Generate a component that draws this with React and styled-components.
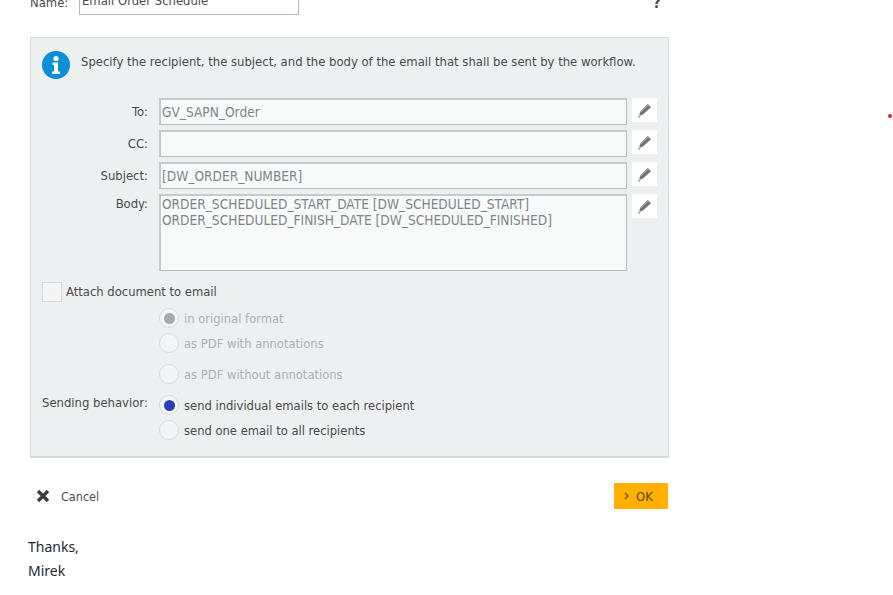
import React from 'react';
import styled, { createGlobalStyle } from 'styled-components';

const GlobalStyle = createGlobalStyle`
  html, body {
    margin: 0;
    padding: 0;
    background: #fff;
    overflow: hidden;
  }
`;

const Page = styled.div`
  position: relative;
  width: 893px;
  height: 595px;
  overflow: hidden;
  padding-left: 28px;
  box-sizing: border-box;
  font-family: "DejaVu Sans Condensed", "DejaVu Sans", sans-serif;
  font-stretch: condensed;
  font-size: 12.95px;
  color: #4a4a4a;
`;

const Dialog = styled.div`
  width: 640px;
  padding-left: 2px;
  box-sizing: border-box;
`;

const NameRow = styled.div`
  height: 15px;
  display: flex;
  align-items: flex-end;
  overflow: hidden;
`;

const NameLabel = styled.span`
  width: 49px;
  line-height: 20px;
  margin-bottom: 2px;
  white-space: nowrap;
`;

const NameInput = styled.div`
  width: 220px;
  height: 27px;
  flex: none;
  box-sizing: border-box;
  border: 1px solid #b4bcc0;
  border-top: none;
  padding: 3px 2px 0;
  line-height: 20px;
  white-space: nowrap;
`;

const Help = styled.span`
  margin-left: 354px;
  font-size: 15px;
  font-weight: 700;
  line-height: 20px;
  margin-bottom: 2px;
`;

const Panel = styled.div`
  margin-top: 22px;
  width: 639px;
  height: 421px;
  box-sizing: border-box;
  background: #edf0f1;
  border: 1px solid #d3d9dc;
  border-bottom-width: 2px;
  padding: 13px 11px 0;
`;

const Intro = styled.div`
  display: flex;
  align-items: flex-start;
  gap: 11px;
  height: 47px;
  line-height: 22px;
  white-space: nowrap;
`;

const Fields = styled.div`
  display: grid;
  grid-template-columns: 106px 468px 30px;
  column-gap: 11px;
  row-gap: 5px;
`;

const FieldLabel = styled.div`
  text-align: right;
  line-height: 27px;
  height: ${p => (p.$body ? '18px' : 'auto')};
  margin-top: ${p => (p.$body ? '-4px' : '0')};
`;

const TextBox = styled.div`
  height: ${p => (p.$tall ? '77px' : '27px')};
  box-sizing: border-box;
  background: #f8fafa;
  border: 1px solid #b4bcc0;
  border-top-width: 2px;
  border-left-width: 2px;
  border-top-color: #c4cbce;
  border-left-color: #c4cbce;
  padding: 0 1px;
  font-size: 13.6px;
  line-height: ${p => (p.$tall ? '16px' : '25px')};
  color: #7f8588;
  white-space: pre;
`;

const PencilButton = styled.div`
  width: 25px;
  height: 24px;
  margin-left: -6px;
  background: #fff;
  display: flex;
  align-items: center;
  justify-content: center;
`;

const AttachRow = styled.div`
  display: flex;
  align-items: center;
  gap: 4px;
  margin-top: 11px;
  height: 20px;
  line-height: 24px;
  font-size: 12.9px;
`;

const Checkbox = styled.span`
  width: 20px;
  height: 20px;
  box-sizing: border-box;
  border: 1px solid #d3d9dc;
  background: #f3f5f6;
`;

const RadioRow = styled.div`
  display: flex;
  align-items: center;
  height: 20px;
  margin-top: ${p => p.$top}px;
`;

const RowLabel = styled.span`
  width: 117px;
  flex: none;
  margin-top: -5px;
  white-space: nowrap;
`;

const Radio = styled.span`
  width: 20px;
  height: 20px;
  flex: none;
  box-sizing: border-box;
  border-radius: 50%;
  border: 1px solid #d5dadd;
  background: #f3f5f6;
  display: flex;
  align-items: center;
  justify-content: center;

  &::after {
    content: "";
    display: ${p => (p.$dot ? 'block' : 'none')};
    width: 11px;
    height: 11px;
    border-radius: 50%;
    background: ${p => p.$dot};
  }
`;

const RadioText = styled.span`
  margin-left: 5px;
  font-size: 12.85px;
  white-space: nowrap;
  color: ${p => (p.$muted ? '#abb1b4' : '#4a4a4a')};
`;

const Actions = styled.div`
  width: 638px;
  margin-top: 25px;
  height: 26px;
  display: flex;
  align-items: center;
  justify-content: space-between;
  padding-left: 6px;
  box-sizing: border-box;
`;

const CancelButton = styled.div`
  display: flex;
  align-items: center;
  gap: 11px;
  font-size: 12.5px;
`;

const OkButton = styled.div`
  width: 54px;
  height: 26px;
  background: #ffb000;
  display: flex;
  align-items: center;
  gap: 7px;
  padding-left: 10px;
  box-sizing: border-box;
  color: #5a4a1a;
`;

const Signature = styled.div`
  margin-top: 26px;
  font-family: "Noto Sans", sans-serif;
  font-stretch: normal;
  font-size: 14px;
  line-height: 24px;
  color: #1c2733;
`;

const RedDot = styled.span`
  position: absolute;
  left: 888px;
  top: 114px;
  width: 4px;
  height: 4px;
  border-radius: 50%;
  background: #e8202a;
`;

const InfoIcon = () => (
  <svg width="28" height="28" viewBox="0 0 28 28">
    <circle cx="14" cy="14" r="14" fill="#0b8fd6" />
    <circle cx="14" cy="7.5" r="2.6" fill="#fff" />
    <path d="M10.5 11.5h5.5v9h2v2.4h-8v-2.4h2v-6.6h-1.5z" fill="#fff" />
  </svg>
);

const PencilIcon = () => (
  <svg width="15" height="15" viewBox="0 0 15 15">
    <path d="M10.6 1l3.4 3.2-8 7.4-3.8 1.2 1-4z" fill="#737373" />
    <path d="M4 8.6l7.6-6.6" stroke="#b0b0b0" strokeWidth="1" />
    <path d="M1 14.2l2.6-1" stroke="#808080" strokeWidth="1" />
  </svg>
);

const CloseIcon = () => (
  <svg width="14" height="14" viewBox="0 0 14 14">
    <path d="M2 2l10 10M12 2L2 12" stroke="#3c3c3c" strokeWidth="3.4" />
  </svg>
);

const Chevron = () => (
  <svg width="5" height="8" viewBox="0 0 5 8">
    <path d="M1 1l3 3-3 3" fill="none" stroke="#6b5410" strokeWidth="1.2" />
  </svg>
);

const fields = [
  { label: 'To:', value: 'GV_SAPN_Order' },
  { label: 'CC:', value: '' },
  { label: 'Subject:', value: '[DW_ORDER_NUMBER]' },
  {
    label: 'Body:',
    value: 'ORDER_SCHEDULED_START_DATE [DW_SCHEDULED_START]\nORDER_SCHEDULED_FINISH_DATE [DW_SCHEDULED_FINISHED]',
    tall: true,
  },
];

export default function App() {
  return (
    <Page>
      <GlobalStyle />
      <Dialog>
        <NameRow>
          <NameLabel>Name:</NameLabel>
          <NameInput>Email Order Schedule</NameInput>
          <Help>?</Help>
        </NameRow>
        <Panel>
          <Intro>
            <InfoIcon />
            <span>Specify the recipient, the subject, and the body of the email that shall be sent by the workflow.</span>
          </Intro>
          <Fields>
            {fields.map(f => (
              <React.Fragment key={f.label}>
                <FieldLabel $body={f.tall}>{f.label}</FieldLabel>
                <TextBox $tall={f.tall}>{f.value}</TextBox>
                <PencilButton><PencilIcon /></PencilButton>
              </React.Fragment>
            ))}
          </Fields>
          <AttachRow>
            <Checkbox />
            <span>Attach document to email</span>
          </AttachRow>
          <RadioRow $top={6}>
            <RowLabel />
            <Radio $dot="#a4acb0" />
            <RadioText $muted>in original format</RadioText>
          </RadioRow>
          <RadioRow $top={5}>
            <RowLabel />
            <Radio />
            <RadioText $muted>as PDF with annotations</RadioText>
          </RadioRow>
          <RadioRow $top={11}>
            <RowLabel />
            <Radio />
            <RadioText $muted>as PDF without annotations</RadioText>
          </RadioRow>
          <RadioRow $top={11}>
            <RowLabel>Sending behavior:</RowLabel>
            <Radio $dot="#2b3fb5" />
            <RadioText>send individual emails to each recipient</RadioText>
          </RadioRow>
          <RadioRow $top={5}>
            <RowLabel />
            <Radio />
            <RadioText>send one email to all recipients</RadioText>
          </RadioRow>
        </Panel>
        <Actions>
          <CancelButton>
            <CloseIcon />
            <span>Cancel</span>
          </CancelButton>
          <OkButton>
            <Chevron />
            <span>OK</span>
          </OkButton>
        </Actions>
      </Dialog>
      <Signature>
        Thanks,
        <br />
        Mirek
      </Signature>
      <RedDot />
    </Page>
  );
}
